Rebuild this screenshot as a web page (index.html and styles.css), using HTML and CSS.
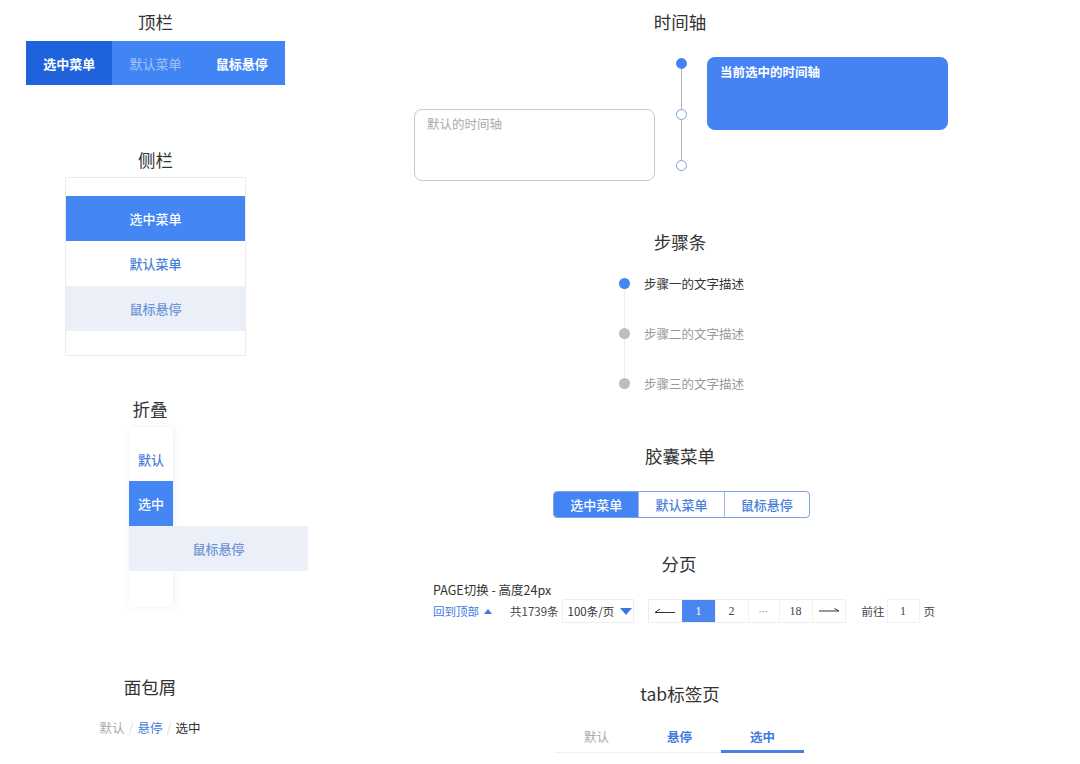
FILE: index.html
```html
<!DOCTYPE html>
<html lang="zh-CN">
<head>
<meta charset="utf-8">
<title>组件样式</title>
<link rel="stylesheet" href="styles.css">
</head>
<body>
<div class="page">
  <div class="col-left">
    <section class="sec sec-top">
      <h2 class="sec-title">顶栏</h2>
      <div class="topbar">
        <div class="tb-item tb-active">选中菜单</div>
        <div class="tb-item tb-default">默认菜单</div>
        <div class="tb-item tb-hover">鼠标悬停</div>
      </div>
    </section>

    <section class="sec sec-side">
      <h2 class="sec-title">侧栏</h2>
      <div class="sidebar">
        <div class="sb-item sb-active">选中菜单</div>
        <div class="sb-item">默认菜单</div>
        <div class="sb-item sb-hover">鼠标悬停</div>
      </div>
    </section>

    <section class="sec sec-fold">
      <h2 class="sec-title">折叠</h2>
      <div class="fold">
        <div class="fd-item">默认</div>
        <div class="fd-item fd-active">选中</div>
        <div class="fd-item fd-hover">鼠标悬停</div>
      </div>
    </section>

    <section class="sec sec-crumb">
      <h2 class="sec-title">面包屑</h2>
      <div class="crumb">
        <span class="cr-default">默认</span><span class="cr-sep">/</span><span class="cr-hover">悬停</span><span class="cr-sep">/</span><span class="cr-active">选中</span>
      </div>
    </section>
  </div>

  <div class="col-right">
    <section class="sec sec-timeline">
      <h2 class="sec-title">时间轴</h2>
      <div class="timeline">
        <div class="tl-card tl-card-active">当前选中的时间轴</div>
        <div class="tl-axis">
          <span class="tl-dot tl-dot-fill"></span>
          <span class="tl-line"></span>
          <span class="tl-dot"></span>
          <span class="tl-line"></span>
          <span class="tl-dot"></span>
        </div>
        <div class="tl-card tl-card-default">默认的时间轴</div>
      </div>
    </section>

    <section class="sec sec-steps">
      <h2 class="sec-title">步骤条</h2>
      <div class="steps">
        <div class="step step-on"><span class="st-dot"></span><span class="st-text">步骤一的文字描述</span></div>
        <div class="step"><span class="st-dot"></span><span class="st-text">步骤二的文字描述</span></div>
        <div class="step step-last"><span class="st-dot"></span><span class="st-text">步骤三的文字描述</span></div>
      </div>
    </section>

    <section class="sec sec-capsule">
      <h2 class="sec-title">胶囊菜单</h2>
      <div class="capsule">
        <div class="cp-item cp-active">选中菜单</div>
        <div class="cp-item">默认菜单</div>
        <div class="cp-item">鼠标悬停</div>
      </div>
    </section>

    <section class="sec sec-pager">
      <h2 class="sec-title title-pager">分页</h2>
      <div class="pg-caption">PAGE切换 - 高度24px</div>
      <div class="pg-row">
        <span class="pg-top">回到顶部<span class="tri-up"></span></span>
        <span class="pg-total">共1739条</span>
        <span class="pg-select">100条/页<span class="tri-down"></span></span>
        <div class="pager">
          <span class="pg-btn pg-arrow"><svg width="22" height="8" viewBox="0 0 22 8"><path d="M1 5.5H21M1 5.5L6 2" fill="none" stroke="#333" stroke-width="1"/></svg></span>
          <span class="pg-btn pg-num pg-cur">1</span>
          <span class="pg-btn pg-num">2</span>
          <span class="pg-btn pg-dots">⋯</span>
          <span class="pg-btn pg-num">18</span>
          <span class="pg-btn pg-arrow"><svg width="22" height="8" viewBox="0 0 22 8"><path d="M1 4H21M21 4L16.5 1.5" fill="none" stroke="#333" stroke-width="1"/></svg></span>
        </div>
        <span class="pg-goto">前往</span>
        <span class="pg-input">1</span>
        <span class="pg-unit">页</span>
      </div>
    </section>

    <section class="sec sec-tabs">
      <h2 class="sec-title">tab标签页</h2>
      <div class="tabs">
        <div class="tab tab-default">默认</div>
        <div class="tab tab-hover">悬停</div>
        <div class="tab tab-active">选中</div>
      </div>
    </section>
  </div>
</div>
</body>
</html>
```

FILE: styles.css
```css
* { box-sizing: border-box; }
html, body { margin: 0; padding: 0; background: #fff; }
body {
  font-family: "Noto Sans CJK SC", "Noto Sans", sans-serif;
  color: #333;
  width: 1080px;
  height: 764px;
  overflow: hidden;
}
.page { display: flex; }
.col-left { width: 311px; }
.col-right { width: 540px; margin-left: 99px; }

.sec-title {
  margin: 0;
  font-size: 17.5px;
  line-height: 24px;
  font-weight: 400;
  text-align: center;
  color: #333;
}

/* top bar */
.sec-top { padding-top: 10px; }
.topbar {
  display: flex;
  width: 259px;
  height: 44px;
  margin: 7px auto 0;
  background: #4185f5;
}
.tb-item {
  flex: 1;
  display: flex;
  align-items: center;
  justify-content: center;
  font-size: 13px;
  font-weight: 700;
  color: #fff;
}
.tb-active { background: #1e62dc; }
.tb-default { color: #a3c3f7; font-weight: 400; }

/* sidebar */
.sec-side { margin-top: 63px; }
.sidebar {
  width: 181px;
  margin: 5px auto 0;
  border: 1px solid #ececec;
  padding: 18px 0 24px;
}
.sb-item {
  height: 45px;
  display: flex;
  align-items: center;
  justify-content: center;
  font-size: 13px;
  font-weight: 500;
  color: #4a7fd8;
}
.sb-active { background: #4386f4; color: #fff; }
.sb-hover { background: #ebeff7; color: #6f95d8; }

/* fold */
.sec-fold { margin-top: 41px; width: 300px; }
.fold {
  width: 44px;
  margin: 6px 0 0 129px;
  padding: 10px 0 36px;
  box-shadow: 1px 0 6px rgba(0, 0, 0, 0.07);
}
.fd-item {
  width: 44px;
  height: 45px;
  display: flex;
  align-items: center;
  justify-content: center;
  font-size: 13px;
  font-weight: 500;
  color: #4a7fd8;
  white-space: nowrap;
}
.fd-item:first-child { height: 44px; }
.fd-active { background: #4386f4; color: #fff; }
.fd-hover { width: 179px; background: #ebeff7; color: #6f95d8; }

/* breadcrumb */
.sec-crumb { margin-top: 68px; width: 300px; }
.crumb {
  margin-top: 19px;
  text-align: center;
  font-size: 12.5px;
  line-height: 20px;
}
.cr-default { color: #aaa; }
.cr-sep { color: #ddd; margin: 0 4px; }
.cr-hover { color: #4a80de; }
.cr-active { color: #333; }

/* timeline */
.sec-timeline { padding-top: 10px; }
.timeline {
  display: grid;
  grid-template-columns: 241px 52px 241px;
  grid-template-rows: 51px 51px 22px;
  margin: 24px 0 0 4px;
}
.tl-card {
  height: 73px;
  border-radius: 8px;
  font-size: 12.5px;
  line-height: 18px;
  padding: 6px 13px;
  align-self: start;
}
.tl-card-active {
  grid-column: 3;
  grid-row: 1 / span 2;
  margin-top: -1px;
  background: #4583f3;
  color: #fff;
  font-weight: 700;
}
.tl-card-default {
  grid-column: 1;
  grid-row: 2 / span 2;
  height: 72px;
  border: 1px solid #c9c9c9;
  color: #aaa;
  padding: 5px 12px;
}
.tl-axis {
  grid-column: 2;
  grid-row: 1 / span 3;
  display: flex;
  flex-direction: column;
  align-items: center;
}
.tl-dot {
  width: 11px;
  height: 11px;
  border-radius: 50%;
  border: 1px solid #7e9fd6;
  background: #fff;
  flex: none;
}
.tl-dot-fill { background: #4583f3; border-color: #4583f3; }
.tl-line { width: 1px; height: 40px; background: #b5b5b5; flex: none; }

/* steps */
.sec-steps { margin-top: 48px; }
.steps { margin: 4px 0 0 209px; }
.step {
  position: relative;
  height: 50px;
  display: flex;
  align-items: center;
  font-size: 12.5px;
  color: #999;
}
.st-dot {
  width: 11px;
  height: 11px;
  border-radius: 50%;
  background: #bdbdbd;
  margin-right: 14px;
  flex: none;
}
.step-on { color: #333; }
.step-on .st-dot { background: #4585f0; }
.step::after {
  content: "";
  position: absolute;
  left: 5px;
  top: 31px;
  width: 1px;
  height: 38px;
  background: #ececec;
}
.step-last::after { display: none; }

/* capsule */
.sec-capsule { margin-top: 36px; }
.capsule {
  display: flex;
  width: 257px;
  height: 27px;
  margin: 23px 0 0 143px;
  border: 1px solid #7fa2df;
  border-radius: 4px;
  overflow: hidden;
}
.cp-item {
  flex: 1;
  display: flex;
  align-items: center;
  justify-content: center;
  font-size: 13px;
  font-weight: 500;
  color: #4a7fd8;
  border-left: 1px solid #9fb8e4;
}
.cp-item:first-child { border-left: none; }
.cp-active { background: #4585f3; color: #fff; }

/* pager */
.sec-pager { margin-top: 34px; }
.title-pager { padding-right: 2px; }
.pg-caption {
  margin: 5px 0 0 23px;
  font-size: 12.5px;
  line-height: 18px;
  color: #333;
}
.pg-row {
  display: flex;
  align-items: center;
  height: 24px;
  margin-left: 23px;
  font-size: 11.5px;
  color: #444;
}
.pg-top { color: #3b78df; display: flex; align-items: center; }
.tri-up {
  width: 0; height: 0;
  margin-left: 5px;
  border-left: 4px solid transparent;
  border-right: 4px solid transparent;
  border-bottom: 5px solid #3b78df;
}
.pg-total { margin-left: 18px; }
.pg-select {
  margin-left: 3px;
  width: 72px;
  height: 24px;
  border: 1px solid #eee;
  display: flex;
  align-items: center;
  padding-left: 5px;
  color: #333;
}
.tri-down {
  width: 0; height: 0;
  margin-left: 6px;
  border-left: 6px solid transparent;
  border-right: 6px solid transparent;
  border-top: 7px solid #3b78df;
}
.pager {
  display: flex;
  margin-left: 14px;
  height: 24px;
  border: 1px solid #eee;
}
.pg-btn {
  width: 33px;
  height: 22px;
  display: flex;
  align-items: center;
  justify-content: center;
  border-left: 1px solid #f0f0f0;
  color: #444;
}
.pg-btn:first-child { border-left: none; }
.pg-num { font-family: "Liberation Serif", serif; font-size: 12px; }
.pg-dots { width: 31px; color: #888; font-family: "DejaVu Sans", sans-serif; font-size: 10px; }
.pg-cur { background: #4a86f0; color: #fff; border-left-color: #4a86f0; }
.pg-goto { margin-left: 16px; }
.pg-input {
  margin-left: 2px;
  width: 33px;
  height: 24px;
  border: 1px solid #f0f0f0;
  display: flex;
  align-items: center;
  justify-content: center;
  font-family: "Liberation Serif", serif;
  font-size: 12px;
}
.pg-unit { margin-left: 4px; }

/* tabs */
.sec-tabs { margin-top: 59px; }
.tabs {
  display: flex;
  width: 249px;
  margin: 14px 0 0 145px;
  border-bottom: 1px solid #f0f0f0;
}
.tab {
  width: 83px;
  height: 32px;
  display: flex;
  align-items: center;
  justify-content: center;
  font-size: 12.5px;
}
.tab-default { color: #aaa; }
.tab-hover { color: #3f7bdf; font-weight: 700; }
.tab-active {
  color: #3f7bdf;
  font-weight: 700;
  border-bottom: 3px solid #4a80de;
  margin-bottom: -1px;
  height: 33px;
  padding-top: 2px;
}
```
